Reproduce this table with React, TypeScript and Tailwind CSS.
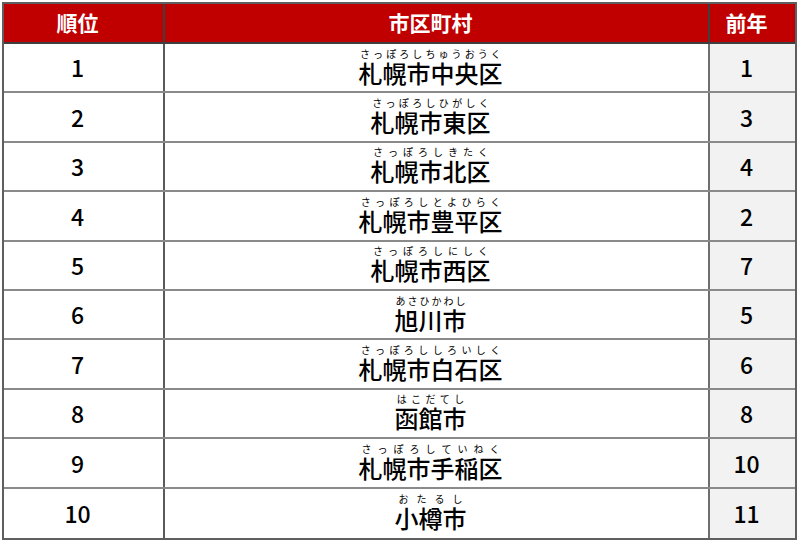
const rows = [
  { rank: 1, name: '札幌市中央区', ruby: 'さっぽろしちゅうおうく', prev: 1 },
  { rank: 2, name: '札幌市東区', ruby: 'さっぽろしひがしく', prev: 3 },
  { rank: 3, name: '札幌市北区', ruby: 'さっぽろしきたく', prev: 4 },
  { rank: 4, name: '札幌市豊平区', ruby: 'さっぽろしとよひらく', prev: 2 },
  { rank: 5, name: '札幌市西区', ruby: 'さっぽろしにしく', prev: 7 },
  { rank: 6, name: '旭川市', ruby: 'あさひかわし', prev: 5 },
  { rank: 7, name: '札幌市白石区', ruby: 'さっぽろししろいしく', prev: 6 },
  { rank: 8, name: '函館市', ruby: 'はこだてし', prev: 8 },
  { rank: 9, name: '札幌市手稲区', ruby: 'さっぽろしていねく', prev: 10 },
  { rank: 10, name: '小樽市', ruby: 'おたるし', prev: 11 },
]

function Ruby({ text, ruby }: { text: string; ruby: string }) {
  return (
    <div className="flex flex-col items-stretch">
      <div className="flex justify-around text-[10px] leading-[12px] font-normal">
        {ruby.split('').map((c, i) => (
          <span key={i}>{c}</span>
        ))}
      </div>
      <div className="text-[24px] leading-[26px] font-medium">{text}</div>
    </div>
  )
}

export default function App() {
  return (
    <div
      className="w-[800px] h-[544px] bg-white pt-[2px] pl-[2px]"
      style={{ fontFamily: '"Noto Sans CJK JP", "Noto Sans", sans-serif' }}
    >
      <div className="w-[795px] border-2 border-[#5f5f5f] text-black">
        <div className="grid grid-cols-[161px_545px_1fr] h-[40px] bg-[#c00000] text-white text-[21px] font-bold border-b-2 border-[#3f3f3f]">
          <div className="flex items-center justify-center pr-[12px] border-r-2 border-[#3f3f3f]">順位</div>
          <div className="flex items-center justify-center pr-[12px] border-r-2 border-[#3f3f3f]">市区町村</div>
          <div className="flex items-center justify-center pr-[12px]">前年</div>
        </div>
        {rows.map((r, i) => (
          <div
            key={r.rank}
            className={`grid grid-cols-[161px_545px_1fr] h-[49.4px] ${i < rows.length - 1 ? 'border-b-2 border-[#8a8a8a]' : ''}`}
          >
            <div className="flex items-center justify-center pr-[12px] text-[23px] font-medium border-r-2 border-[#5a5a5a]">
              {r.rank}
            </div>
            <div className="flex items-center justify-center pr-[12px] pb-[2px] border-r-2 border-[#6f6f6f]">
              <Ruby text={r.name} ruby={r.ruby} />
            </div>
            <div className="flex items-center justify-center pr-[12px] text-[23px] font-medium bg-[#f2f2f2]">{r.prev}</div>
          </div>
        ))}
      </div>
    </div>
  )
}
